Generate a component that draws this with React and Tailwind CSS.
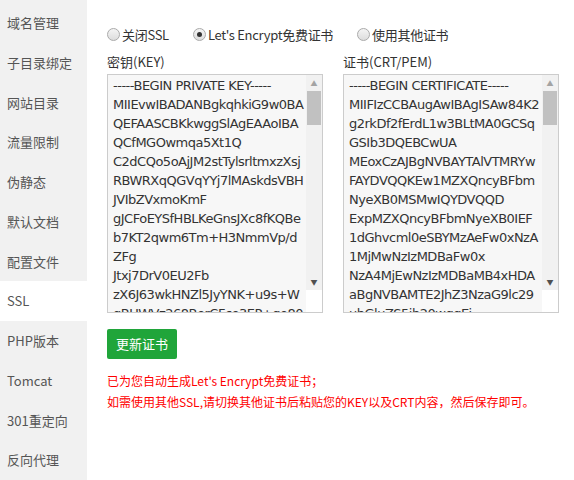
const menu = ["域名管理", "子目录绑定", "网站目录", "流量限制", "伪静态", "默认文档", "配置文件", "SSL", "PHP版本", "Tomcat", "301重定向", "反向代理"];

const keyText = `-----BEGIN PRIVATE KEY-----
MIIEvwIBADANBgkqhkiG9w0BAQEFAASCBKkwggSlAgEAAoIBAQCfMGOwmqa5Xt1Q
C2dCQo5oAjJM2stTylsrltmxzXsjRBWRXqQGVqYYj7lMAskdsVBHJVIbZVxmoKmF
gJCFoEYSfHBLKeGnsJXc8fKQBeb7KT2qwm6Tm+H3NmmVp/dZFg
Jtxj7DrV0EU2Fb
zX6J63wkHNZl5JyYNK+u9s+WgBUWVz268BerCFce3EP+qo80LuTnQGvSiTWDjBX4
abcdEFGH`;

const certText = `-----BEGIN CERTIFICATE-----
MIIFIzCCBAugAwIBAgISAw84K2g2rkDf2fErdL1w3BLtMA0GCSqGSIb3DQEBCwUA
MEoxCzAJBgNVBAYTAlVTMRYwFAYDVQQKEw1MZXQncyBFbmNyeXB0MSMwIQYDVQQD
ExpMZXQncyBFbmNyeXB0IEF1dGhvcml0eSBYMzAeFw0xNzA1MjMwNzIzMDBaFw0x
NzA4MjEwNzIzMDBaMB4xHDAaBgNVBAMTE2JhZ3NzaG9lc29ubGluZS5jb20wggEi
MA0GCSqG`;

function Box({ label, value }) {
  return (
    <div className="flex flex-col">
      <div className="text-[13px] text-[#333] mb-[3px] leading-[18px]">{label}</div>
      <div className="relative w-[216px] h-[239px]">
        <textarea
          readOnly
          value={value}
          className="w-full h-full border border-[#ccc] bg-[#f7f7f7] text-[13px] leading-[19px] text-[#333] pl-[5px] pr-[18px] py-[1px] overflow-hidden resize-none break-all"
          style={{ fontFamily: "Tahoma, 'DejaVu Sans', sans-serif", letterSpacing: "-0.5px" }}
        />
        <div className="absolute right-[1px] top-[1px] bottom-[1px] w-[16px] bg-[#f1f1f1] flex flex-col items-center">
          <span className="text-[7px] text-[#a3a3a3] h-[16px] leading-[16px]">▲</span>
          <span className="w-[14px] h-[34px] bg-[#c1c1c1]" />
          <span className="flex-1" />
          <span className="text-[7px] text-[#505050] h-[16px] leading-[16px]">▼</span>
          <span className="h-[22px] w-full bg-white" />
        </div>
      </div>
    </div>
  );
}

function Radio({ checked, label }) {
  return (
    <label className="flex items-center gap-[2px] text-[13px] text-[#333]">
      <span className="w-[13px] h-[13px] rounded-full border border-[#aaa] bg-gradient-to-b from-[#f4f4f4] to-[#ddd] flex items-center justify-center">
        {checked && <span className="w-[5px] h-[5px] rounded-full bg-[#333]" />}
      </span>
      {label}
    </label>
  );
}

export default function App() {
  return (
    <div className="w-[574px] h-[480px] flex bg-white overflow-hidden" style={{ fontFamily: "'Microsoft YaHei', 'Noto Sans CJK SC', sans-serif" }}>
      <div className="w-[87px] bg-[#f1f1f1] pt-[3px] flex flex-col">
        {menu.map(m => (
          <div key={m} className={`h-[40px] flex items-center pl-[7px] text-[13px] text-[#555] ${m === "SSL" ? "bg-white" : ""}`}>{m}</div>
        ))}
      </div>
      <div className="flex-1 pl-[20px] pt-[25px]">
        <div className="flex gap-[24px] items-center tracking-[-0.3px]">
          <Radio label="关闭SSL" />
          <Radio checked label="Let's Encrypt免费证书" />
          <Radio label="使用其他证书" />
        </div>
        <div className="flex gap-[20px] mt-[8px]">
          <Box label="密钥(KEY)" value={keyText} />
          <Box label="证书(CRT/PEM)" value={certText} />
        </div>
        <button className="mt-[16px] h-[30px] w-[70px] bg-[#20a53a] text-white text-[13px] rounded-[2px]">更新证书</button>
        <div className="mt-[11px] text-[12px] leading-[21px] text-[#ff0000]">
          <div>已为您自动生成Let's Encrypt免费证书；</div>
          <div>如需使用其他SSL,请切换其他证书后粘贴您的KEY以及CRT内容，然后保存即可。</div>
        </div>
      </div>
    </div>
  );
}
